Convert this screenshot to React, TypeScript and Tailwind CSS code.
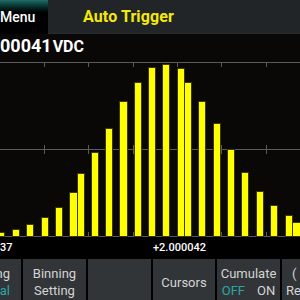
const bars: [number, number, number][] = [
  // [x, top, width] in chart coords (chart top = page y 57)
  [-3, 175, 7],
  [12, 172, 7],
  [26, 167, 7],
  [41, 160, 7],
  [55, 150, 7],
  [69, 135, 8],
  [77, 116, 7],
  [91, 95, 7],
  [105, 71, 7],
  [119, 44, 8],
  [134, 25, 7],
  [148, 10, 7],
  [162, 7, 7],
  [177, 11, 7],
  [184, 25, 7],
  [198, 44, 7],
  [213, 66, 7],
  [227, 92, 7],
  [241, 115, 7],
  [256, 134, 7],
  [270, 148, 7],
  [285, 158, 7],
  [292, 165, 8],
];

const ticksX = [44, 88, 133, 177, 221, 266];

function Histogram() {
  return (
    <svg width="300" height="180" viewBox="0 0 300 180" className="block">
      {/* grid */}
      <g stroke="#5b5b5b" strokeWidth="1" shapeRendering="crispEdges">
        <line x1="0" y1="5.5" x2="300" y2="5.5" />
        <line x1="0" y1="92.5" x2="300" y2="92.5" />
        <line x1="0" y1="179.5" x2="300" y2="179.5" />
        {ticksX.map((x) => (
          <g key={x}>
            <line x1={x + 0.5} y1="5" x2={x + 0.5} y2="10" />
            <line x1={x + 0.5} y1="88" x2={x + 0.5} y2="97" />
            <line x1={x + 0.5} y1="175" x2={x + 0.5} y2="180" />
          </g>
        ))}
      </g>
      {/* bars */}
      <g fill="#ffff00" stroke="#3a3a00" strokeWidth="1" shapeRendering="crispEdges">
        {bars.map(([x, top, w], i) => (
          <rect key={i} x={x + 0.5} y={top + 0.5} width={w} height={179 - top} />
        ))}
      </g>
    </svg>
  );
}

function SoftKey({ children, className = '' }: { children?: React.ReactNode; className?: string }) {
  return (
    <div
      className={`bg-[#323538] flex flex-col justify-center pt-[5px] text-[13px] leading-[17px] text-[#d4d4d4] overflow-hidden whitespace-nowrap ${className}`}
    >
      {children}
    </div>
  );
}

export default function App() {
  return (
    <div
      className="w-[300px] h-[300px] overflow-hidden bg-[#0a0707] flex flex-col"
      style={{ fontFamily: 'Roboto, "Liberation Sans", sans-serif' }}
    >
      {/* header */}
      <div className="h-[34px] flex shrink-0">
        <div className="w-[48px] bg-linear-to-b from-[#1f6e68] to-black to-45% flex items-center text-white text-[14px] font-medium pt-[1px]">
          Menu
        </div>
        <div className="flex-1 bg-[#212528] flex items-center pl-[35px] border-b border-[#2a2e31]">
          <span className="text-[#f5e90a] text-[16px] font-bold tracking-[0.1px]">Auto Trigger</span>
        </div>
      </div>

      {/* readout */}
      <div className="h-[23px] flex items-end shrink-0 text-white font-bold leading-none pb-[2px]">
        <span className="text-[18px]">00041</span>
        <span className="text-[16px] ml-[1px]">VDC</span>
      </div>

      {/* chart */}
      <div className="h-[180px] shrink-0">
        <Histogram />
      </div>

      {/* axis labels */}
      <div className="h-[22px] shrink-0 bg-black text-white text-[11px] font-medium flex items-center">
        <span className="w-[153px]">37</span>
        <span>+2.000042</span>
      </div>

      {/* soft keys */}
      <div className="flex-1 flex gap-[2px] bg-black">
        <SoftKey className="w-[21px] items-end pr-[11px]">
          <span>ng</span>
          <span className="text-[#2aa6a6]">al</span>
        </SoftKey>
        <SoftKey className="w-[63px] items-center">
          <span>Binning</span>
          <span>Setting</span>
        </SoftKey>
        <SoftKey className="w-[63px] items-center" />
        <SoftKey className="w-[62px] items-center">
          <span>Cursors</span>
        </SoftKey>
        <SoftKey className="w-[63px] items-center">
          <span>Cumulate</span>
          <span className="flex gap-[12px]">
            <span className="text-[#2aa6a6]">OFF</span>
            <span>ON</span>
          </span>
        </SoftKey>
        <SoftKey className="flex-1 items-start pl-[4px]">
          <span className="pl-[6px]">(</span>
          <span>Re</span>
        </SoftKey>
      </div>
    </div>
  );
}
